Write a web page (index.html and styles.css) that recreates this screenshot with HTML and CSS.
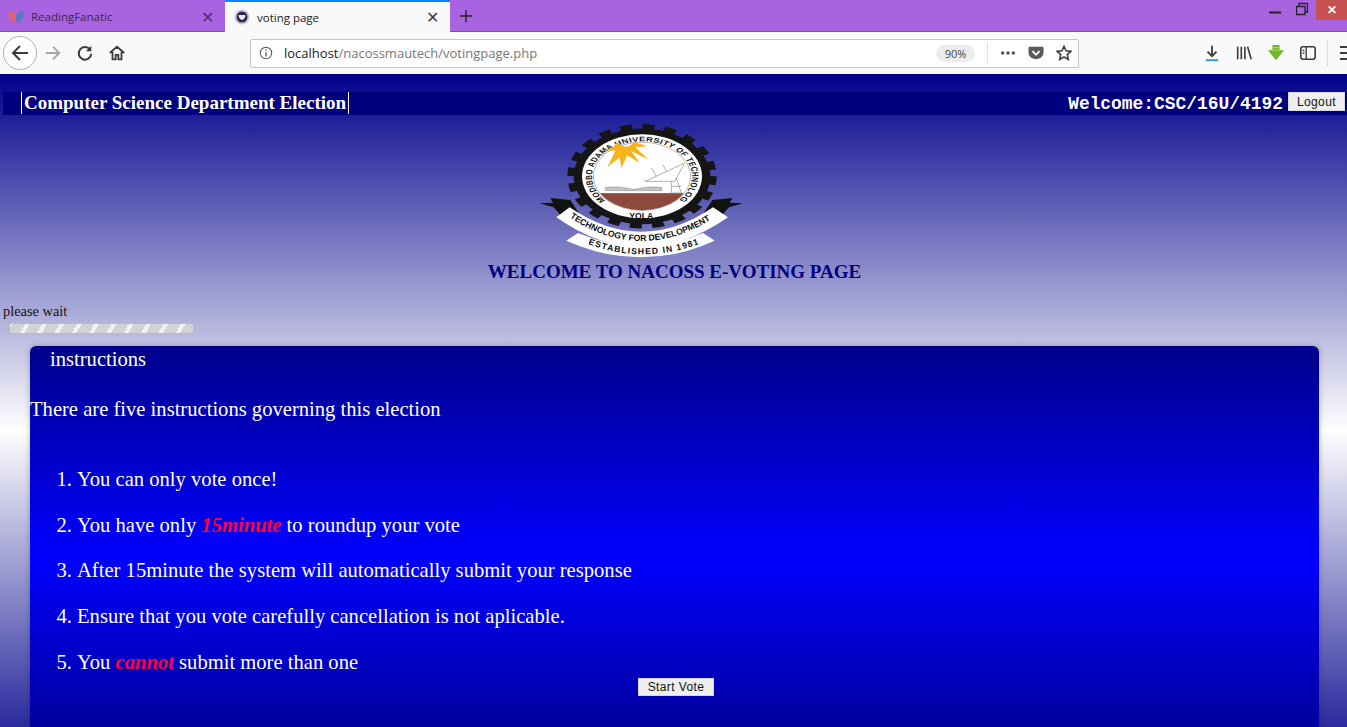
FILE: index.html
```html
<!DOCTYPE html>
<html lang="en">
<head>
    <meta charset="UTF-8">
    <title>voting page</title>
    <link rel="stylesheet" href="styles.css">
</head>
<body>
    <div class="tabbar">
        <div class="tab">
            <svg class="favicon" viewBox="0 0 16 16"><path d="M8 6C6 3 3 1 0 2c0 4 2 10 5 12 2 0 3-3 3-5z" fill="#e0607a"/><path d="M8 6c2-3 5-5 8-4 0 4-2 10-5 12-2 0-3-3-3-5z" fill="#5a78c8"/></svg>
            <span class="tab-title">ReadingFanatic</span>
            <span class="tab-close">&#10005;</span>
        </div>
        <div class="tab tab-active">
            <svg class="favicon" viewBox="0 0 16 16"><circle cx="8" cy="8" r="7.5" fill="#c9c6dc"/><circle cx="8" cy="8" r="5.5" fill="#2a2a4a"/><path d="M4.500 6h7c0 3-2 4.500-3.500 5C6.500 10.500 4.500 9 4.500 6z" fill="#e8e8f0"/></svg>
            <span class="tab-title">voting page</span>
            <span class="tab-close">&#10005;</span>
        </div>
        <svg class="new-tab" viewBox="0 0 16 16"><path d="M8 1v14M1 8h14" stroke="#222" stroke-width="1.600"/></svg>
        <div class="window-btns">
            <svg class="win-icon" viewBox="0 0 12 20"><path d="M0 12.500h12" stroke="#222" stroke-width="2"/></svg>
            <svg class="win-icon" viewBox="0 0 12 20"><path d="M.5 6.500h8.500v8H.5zM3 6V3.500h8.500V12H9" fill="none" stroke="#222" stroke-width="1.300"/></svg>
            <div class="win-close">&#10005;</div>
        </div>
    </div>

    <div class="toolbar">
        <div class="back-btn">
            <svg viewBox="0 0 20 20" width="20" height="20"><path d="M18 10H3M10 3l-7 7 7 7" fill="none" stroke="#3c3c3c" stroke-width="2"/></svg>
        </div>
        <svg class="tool-icon" viewBox="0 0 20 20"><path d="M2 10h15M10 3l7 7-7 7" fill="none" stroke="#a6a6a6" stroke-width="2"/></svg>
        <svg class="tool-icon" viewBox="0 0 20 20"><path d="M15.500 6A7 7 0 1 0 17 11" fill="none" stroke="#3c3c3c" stroke-width="2.200"/><path d="M17 2v6h-6z" fill="#3c3c3c"/></svg>
        <svg class="tool-icon" viewBox="0 0 20 20"><path d="M2 10l8-7 8 7M5 9v8h3.500v-5h3v5H15V9" fill="none" stroke="#3c3c3c" stroke-width="2"/></svg>
        <div class="urlbar">
            <svg class="info-icon" viewBox="0 0 16 16"><circle cx="8" cy="8" r="6.500" fill="none" stroke="#555" stroke-width="1.200"/><path d="M8 7v5M8 4v1.600" stroke="#555" stroke-width="1.500"/></svg>
            <span class="url"><span class="url-host">localhost</span>/nacossmautech/votingpage.php</span>
            <span class="zoom-pill">90%</span>
            <span class="url-sep"></span>
            <svg class="url-icon" viewBox="0 0 18 18"><circle cx="3" cy="9" r="2" fill="#555"/><circle cx="9" cy="9" r="2" fill="#555"/><circle cx="15" cy="9" r="2" fill="#555"/></svg>
            <svg class="url-icon" viewBox="0 0 18 18"><path d="M2 2h14a1.500 1.500 0 0 1 1.500 1.500V8c0 5-4 8-8.500 8S.500 13 .500 8V3.500A1.500 1.500 0 0 1 2 2z" fill="#5a5a5a"/><path d="M5 7l4 4 4-4" fill="none" stroke="#fff" stroke-width="2"/></svg>
            <svg class="url-icon" viewBox="0 0 18 18"><path d="M9 1.500l2.300 5 5.400.6-4 3.700 1.100 5.400L9 13.500l-4.800 2.700 1.100-5.400-4-3.700 5.400-.6z" fill="none" stroke="#444" stroke-width="1.900"/></svg>
        </div>
        <div class="tool-right">
            <svg class="tool-icon" viewBox="0 0 20 20"><path d="M10 2v11M5 8.500l5 5 5-5" fill="none" stroke="#3c3c3c" stroke-width="2"/><path d="M3 18h14" stroke="#2a90d8" stroke-width="2"/></svg>
            <svg class="tool-icon" viewBox="0 0 20 20"><path d="M3 3v14M7 3v14M11 3v14M14 3l4 14" fill="none" stroke="#3c3c3c" stroke-width="1.800"/></svg>
            <svg class="tool-icon" viewBox="0 0 20 20"><path d="M6 1h8v6h5l-9 11L1 7h5z" fill="#6cb82c"/><path d="M6 4h8M6 7h8" stroke="#a5dc5c" stroke-width="1.200"/></svg>
            <svg class="tool-icon sidebar-icon" viewBox="0 0 20 20"><rect x="2" y="3" width="16" height="14" rx="2.500" fill="none" stroke="#3c3c3c" stroke-width="1.800"/><path d="M8 3v14M4 7h2M4 10h2" stroke="#3c3c3c" stroke-width="1.500"/></svg>
            <span class="tool-sep"></span>
            <svg class="menu-icon" viewBox="0 0 10 20"><path d="M0 4h10M0 10h10M0 16h10" stroke="#3c3c3c" stroke-width="2"/></svg>
        </div>
    </div>

    <div class="page">
        <div class="topbar">
            <h3 class="site-title">Computer Science Department Election</h3>
            <div class="user-box">
                <span class="welcome">Welcome:CSC/16U/4192</span>
                <button class="btn btn-logout">Logout</button>
            </div>
        </div>

        <div class="banner">
            <svg class="logo" viewBox="33 15 615 405">
                <defs>
                    <path id="ring-text" d="M-109 103A150 150 0 1 1 109 103"/>
                    <path id="motto" d="M125 298Q340 440 560 298"/>
                    <path id="est" d="M180 378Q340 440 515 378"/>
                    <clipPath id="disc-clip"><circle r="145"/></clipPath>
                </defs>
                <!-- ribbon tails -->
                <path d="M35 256l40-2-8-14 60 6 25 38-50 12-25-28z" fill="#111"/>
                <path d="M645 256l-40-2 8-14-60 6-25 38 50 12 25-28z" fill="#111"/>
                <!-- gear -->
                <g transform="translate(342 175) scale(1 .7)">
                    <circle r="205" fill="#151515"/>
                    <circle r="212" fill="none" stroke="#151515" stroke-width="24" stroke-dasharray="36 30.600"/>
                    <circle r="180" fill="#fff"/>
                    <circle r="146" fill="#fff" stroke="#555" stroke-width="1.500"/>
                    <g clip-path="url(#disc-clip)">
                        <rect x="-150" y="72" width="300" height="90" fill="#8b4a3c"/>
                    </g>
                    <text class="ring-label"><textPath href="#ring-text" textLength="715">MODIBBO ADAMA UNIVERSITY OF TECHNOLOGY</textPath></text>
                </g>
                <!-- sun -->
                <path d="M228 97l34 1-24 50 37-30 5 32 18-38 37 23-25-35 52 25-40-37 36-3-40-13c-6 8-14 14-24 14s-20-6-26-16c-4 12-14 20-40 27z" fill="#f4b41a"/>
                <!-- dish -->
                <path d="M352 190l118-55-30 55zM385 175l-15-25M415 160l-10-20M430 190v35h30l-15-45M430 205h30M352 190l-5-5" fill="none" stroke="#888" stroke-width="2"/>
                <!-- book -->
                <path d="M232 208q40-6 85 6q45-12 85-6v10H232z" fill="#c4c4c0" stroke="#666"/>
                <!-- ribbons -->
                <path d="M85 298Q340 478 600 298L555 268Q340 415 125 268z" fill="#fff"/>
                <path d="M115 368Q340 468 560 368L525 345Q340 425 150 345z" fill="#fff"/>
                <text class="yola" x="340" y="303">YOLA</text>
                <text class="motto-label"><textPath href="#motto" textLength="450">TECHNOLOGY FOR DEVELOPMENT</textPath></text>
                <text class="motto-label"><textPath href="#est" textLength="340">ESTABLISHED IN 1981</textPath></text>
            </svg>
            <h2 class="welcome-title">WELCOME TO NACOSS E-VOTING PAGE</h2>
        </div>

        <div class="wait-box">
            <div class="wait-text">please wait</div>
            <div class="progress"></div>
        </div>

        <div class="panel">
            <div class="panel-title">instructions</div>
            <p class="panel-intro">There are five instructions governing this election</p>
            <ol class="rules">
                <li>You can only vote once!</li>
                <li>You have only <em>15minute</em> to roundup your vote</li>
                <li>After 15minute the system will automatically submit your response</li>
                <li>Ensure that you vote carefully cancellation is not aplicable.</li>
                <li>You <em>cannot</em> submit more than one</li>
            </ol>
            <div class="panel-actions"><button class="btn btn-start">Start Vote</button></div>
        </div>
    </div>
</body>
</html>
```

FILE: styles.css
```css
html, body {
    margin: 0;
    padding: 0;
    height: 727px;
    overflow: hidden;
}
body {
    font-family: "Liberation Serif", serif;
    background-color: #fff;
}
.tabbar {
    height: 32px;
    background-color: #a864e0;
    border-bottom: 1px solid #7d4fa8;
    box-sizing: border-box;
    display: flex;
    align-items: stretch;
    font-family: "Open Sans", sans-serif;
    font-size: 11.500px;
    color: #3a2a50;
}
.tab {
    width: 225px;
    box-sizing: border-box;
    display: flex;
    align-items: center;
    padding: 2px 8px 0 8px;
    gap: 7px;
}
.tab-active {
    background-color: #f9f9fa;
    border-top: 2px solid #0a84ff;
    height: 32px;
    padding: 0 8px 0 9px;
    color: #222;
}
.favicon {
    width: 16px;
    height: 16px;
}
.tab-title {
    flex: 1;
}
.tab-close {
    font-size: 16px;
    width: 20px;
    text-align: center;
    color: #4a3070;
}
.tab-active .tab-close {
    color: #3c3c3c;
}
.new-tab {
    width: 14px;
    height: 14px;
    margin: 9px 0 0 9px;
}
.window-btns {
    margin-left: auto;
    display: flex;
}
.win-icon {
    width: 12px;
    height: 20px;
    margin-right: 15px;
}
.win-icon + .win-icon {
    margin-right: 8px;
}
.win-close {
    width: 31px;
    height: 20px;
    background-color: #c75050;
    color: #fff;
    font-size: 12px;
    font-weight: bold;
    text-align: center;
    line-height: 20px;
}
.toolbar {
    height: 42px;
    background-color: #f9f9fa;
    display: flex;
    align-items: center;
    padding-left: 3px;
    box-sizing: border-box;
    overflow: hidden;
}
.back-btn {
    width: 32px;
    height: 32px;
    border: 1px solid #b1b1b1;
    border-radius: 50%;
    background-color: #fff;
    display: flex;
    align-items: center;
    justify-content: center;
    margin-right: 7px;
    flex: none;
}
.tool-icon {
    width: 18px;
    height: 18px;
    margin-right: 14px;
    flex: none;
}
.urlbar {
    width: 829px;
    height: 29px;
    box-sizing: border-box;
    margin-left: 110px;
    background-color: #fff;
    border: 1px solid #c4c4c4;
    border-radius: 2px;
    display: flex;
    align-items: center;
    padding: 0 6px 0 8px;
    font-family: "Open Sans", sans-serif;
    font-size: 13px;
    color: #777;
    flex: none;
}
.info-icon {
    width: 14px;
    height: 14px;
    margin-right: 11px;
}
.url {
    flex: 1;
}
.url-host {
    color: #222;
}
.zoom-pill {
    background-color: #ededf0;
    border-radius: 9px;
    font-size: 11px;
    color: #444;
    width: 39px;
    text-align: center;
    padding: 1px 0;
    margin-right: 12px;
}
.url-sep {
    width: 1px;
    height: 22px;
    background-color: #e0e0e0;
    margin-right: 12px;
}
.url-icon {
    width: 16px;
    height: 16px;
    margin-right: 12px;
}
.url-icon:last-child {
    margin-right: 0;
}
.tool-right {
    display: flex;
    align-items: center;
    margin-left: 124px;
    flex: none;
}
.sidebar-icon {
    margin-right: 10px;
}
.tool-sep {
    width: 1px;
    height: 26px;
    background-color: #e0e0e0;
    margin-right: 12px;
}
.menu-icon {
    width: 10px;
    height: 20px;
}
.page {
    height: 653px;
    overflow: hidden;
    padding-top: 18px;
    box-sizing: border-box;
    background: linear-gradient(#00008b 0, #fff 356px, #00008b 712px);
    background-repeat: no-repeat;
}
.topbar {
    height: 23px;
    margin-left: 3px;
    background-color: #00007f;
    display: flex;
    justify-content: space-between;
    align-items: flex-start;
    color: #fff;
}
.site-title {
    margin: 0 0 0 18px;
    padding: 0 2px;
    height: 22px;
    border-left: 1px solid #fff;
    border-right: 1px solid #fff;
    font-size: 19px;
    line-height: 22px;
    white-space: nowrap;
}
.user-box {
    display: flex;
    align-items: flex-start;
    gap: 5px;
    margin-right: 2px;
}
.welcome {
    font-family: "Liberation Mono", monospace;
    font-weight: bold;
    font-size: 17.900px;
    line-height: 24px;
}
.btn {
    font-family: "Liberation Sans", sans-serif;
    font-size: 12px;
    letter-spacing: 0.4px;
    height: 18px;
    padding: 0 8px;
    background-color: #efefef;
    border: 1px solid #d8d8d8;
    color: #111;
}
.btn-logout {
    height: 19px;
}
.btn-start {
    padding: 0 9px;
}
.banner {
    display: flex;
    flex-direction: column;
    align-items: center;
    padding-top: 8px;
}
.logo {
    width: 205px;
    height: 135px;
    margin-right: 64px;
    display: block;
}
.ring-label {
    font-family: "Liberation Sans", sans-serif;
    font-weight: bold;
    font-size: 28px;
    fill: #111;
}
.yola, .motto-label {
    font-family: "Liberation Sans", sans-serif;
    font-weight: bold;
    font-size: 26px;
    fill: #111;
}
.yola {
    text-anchor: middle;
}
.welcome-title {
    margin: 2px 0 0;
    padding-left: 2px;
    font-size: 19px;
    line-height: 24px;
    color: #00007f;
}
.wait-box {
    padding-top: 19px;
}
.wait-text {
    margin-left: 3px;
    font-size: 14.400px;
    line-height: 16px;
    color: #111;
}
.progress {
    width: 185px;
    height: 11px;
    margin: 4px 0 0 9px;
    border-radius: 2px;
    background-color: #d8d8d8;
    background-image: repeating-linear-gradient(-60deg, #d2d2d2 0, #d2d2d2 11px, #f2f2f2 11px, #f2f2f2 15px);
    border: 1px solid #bbb;
    box-sizing: border-box;
}
.panel {
    height: 418px;
    margin: 12px 28px 0 30px;
    border-radius: 6px;
    background: linear-gradient(#00008b, #0000ff 50%, #00008b);
    box-shadow: 0 0 6px rgba(0, 0, 0, 0.25);
    color: #fff;
    font-size: 20.600px;
}
.panel-title {
    padding: 1px 0 0 20px;
    line-height: 24px;
}
.panel-intro {
    margin: 26px 0 0;
    line-height: 24px;
}
.rules {
    margin: 46px 0 0;
    padding-left: 47px;
    line-height: 24px;
}
.rules li {
    margin-bottom: 21.700px;
}
.rules li:last-child {
    margin-bottom: 0;
}
.rules em {
    color: #ff0033;
    font-weight: bold;
}
.panel-actions {
    display: flex;
    justify-content: center;
    margin-top: 4px;
    padding-left: 3px;
}
```
